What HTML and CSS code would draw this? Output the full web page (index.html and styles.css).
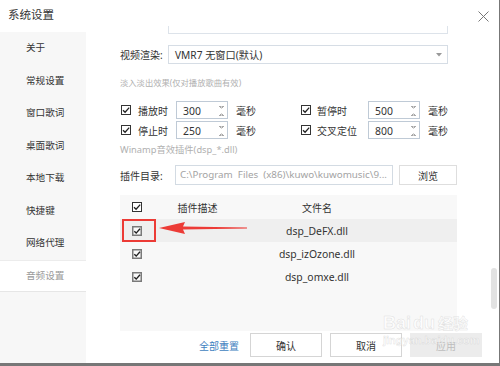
FILE: index.html
```html
<!DOCTYPE html>
<html lang="zh-CN">
<head>
    <meta charset="UTF-8">
    <title>系统设置</title>
    <link rel="stylesheet" href="styles.css">
</head>
<body>
    <div class="window">
        <div class="titlebar">
            <span class="title">系统设置</span>
            <svg class="close" viewBox="0 0 11 11"><path d="M0.5 0.5 L10.5 10.5 M10.5 0.5 L0.5 10.5" stroke="#777" stroke-width="1"/></svg>
        </div>

        <div class="main">
            <nav class="sidebar">
                <div class="nav-item">关于</div>
                <div class="nav-item">常规设置</div>
                <div class="nav-item">窗口歌词</div>
                <div class="nav-item">桌面歌词</div>
                <div class="nav-item">本地下载</div>
                <div class="nav-item">快捷键</div>
                <div class="nav-item">网络代理</div>
                <div class="nav-item active">音频设置</div>
            </nav>

            <section class="panel">
                <div class="stub"></div>

                <div class="field-row">
                    <label class="render-label">视频渲染:</label>
                    <div class="select">
                        <span>VMR7 无窗口(默认)</span>
                        <svg class="caret" viewBox="0 0 6 4"><path d="M0 0 H6 L3 3.5 Z" fill="#999"/></svg>
                    </div>
                </div>

                <p class="hint hint-fade">淡入淡出效果(仅对播放歌曲有效)</p>

                <div class="fade-grid">
                    <svg class="cb" viewBox="0 0 10 10"><rect x="0.5" y="0.5" width="9" height="9" fill="#fff" stroke="#333"/><path d="M2 5.2 L4.1 7.3 L8.2 2.6" fill="none" stroke="#222" stroke-width="1.3"/></svg>
                    <span class="opt">播放时</span>
                    <div class="spin"><span>300</span><i class="arrows"></i></div>
                    <span class="unit">毫秒</span>
                    <svg class="cb" viewBox="0 0 10 10"><rect x="0.5" y="0.5" width="9" height="9" fill="#fff" stroke="#333"/><path d="M2 5.2 L4.1 7.3 L8.2 2.6" fill="none" stroke="#222" stroke-width="1.3"/></svg>
                    <span class="opt">暂停时</span>
                    <div class="spin"><span>500</span><i class="arrows"></i></div>
                    <span class="unit">毫秒</span>

                    <svg class="cb" viewBox="0 0 10 10"><rect x="0.5" y="0.5" width="9" height="9" fill="#fff" stroke="#333"/><path d="M2 5.2 L4.1 7.3 L8.2 2.6" fill="none" stroke="#222" stroke-width="1.3"/></svg>
                    <span class="opt">停止时</span>
                    <div class="spin"><span>250</span><i class="arrows"></i></div>
                    <span class="unit">毫秒</span>
                    <svg class="cb" viewBox="0 0 10 10"><rect x="0.5" y="0.5" width="9" height="9" fill="#fff" stroke="#333"/><path d="M2 5.2 L4.1 7.3 L8.2 2.6" fill="none" stroke="#222" stroke-width="1.3"/></svg>
                    <span class="opt">交叉定位</span>
                    <div class="spin"><span>800</span><i class="arrows"></i></div>
                    <span class="unit">毫秒</span>
                </div>

                <p class="hint hint-winamp">Winamp音效插件(dsp_*.dll)</p>

                <div class="field-row dir-row">
                    <label class="dir-label">插件目录:</label>
                    <div class="path">C:\Program  Files  (x86)\kuwo\kuwomusic\9...</div>
                    <button class="btn browse">浏览</button>
                </div>

                <div class="plugins">
                    <div class="plug-row head">
                        <span class="cell-cb"><svg class="cb" viewBox="0 0 10 10"><rect x="0.5" y="0.5" width="9" height="9" fill="#fff" stroke="#333"/><path d="M2 5.2 L4.1 7.3 L8.2 2.6" fill="none" stroke="#222" stroke-width="1.3"/></svg></span>
                        <span class="cell-desc">插件描述</span>
                        <span class="cell-file">文件名</span>
                    </div>
                    <div class="plug-row selected">
                        <span class="cell-cb"><svg class="cb" viewBox="0 0 10 10"><rect x="0.75" y="0.75" width="8.5" height="8.5" fill="#fafafa" stroke="#7a7a7a" stroke-width="1.5"/><path d="M2.3 5.2 L4.2 7.1 L8 2.8" fill="none" stroke="#222" stroke-width="1.4"/></svg></span>
                        <span class="cell-desc"></span>
                        <span class="cell-file">dsp_DeFX.dll</span>
                    </div>
                    <div class="plug-row">
                        <span class="cell-cb"><svg class="cb" viewBox="0 0 10 10"><rect x="0.75" y="0.75" width="8.5" height="8.5" fill="#fafafa" stroke="#7a7a7a" stroke-width="1.5"/><path d="M2.3 5.2 L4.2 7.1 L8 2.8" fill="none" stroke="#222" stroke-width="1.4"/></svg></span>
                        <span class="cell-desc"></span>
                        <span class="cell-file">dsp_izOzone.dll</span>
                    </div>
                    <div class="plug-row">
                        <span class="cell-cb"><svg class="cb" viewBox="0 0 10 10"><rect x="0.75" y="0.75" width="8.5" height="8.5" fill="#fafafa" stroke="#7a7a7a" stroke-width="1.5"/><path d="M2.3 5.2 L4.2 7.1 L8 2.8" fill="none" stroke="#222" stroke-width="1.4"/></svg></span>
                        <span class="cell-desc"></span>
                        <span class="cell-file">dsp_omxe.dll</span>
                    </div>

                    <!-- annotation drawn over the list -->
                    <div class="mark-box"></div>
                    <svg class="mark-arrow" width="90" height="14" viewBox="0 0 90 14"><path d="M0 7 L26 1 L24 5.6 L88 6.4 L88 7.6 L24 8.4 L26 13 Z" fill="#ec3b36"/></svg>
                </div>

                <div class="footer">
                    <a class="reset">全部重置</a>
                    <button class="btn">确认</button>
                    <button class="btn">取消</button>
                    <button class="btn disabled">应用</button>
                </div>
            </section>

            <div class="scroll-track"><div class="thumb"></div></div>
        </div>

        <div class="watermark">
            <div class="wm-logo">Bai<span class="wm-du">du</span><span class="wm-cn">经验</span></div>
            <div class="wm-url">jingyan.baidu.com</div>
        </div>
    </div>
    <div class="desk"></div>
</body>
</html>
```

FILE: styles.css
```css
* {
    box-sizing: border-box;
}
body {
    margin: 0;
    background: #6e6e6e;
    font-family: "Noto Sans", "Noto Sans CJK SC", sans-serif;
    color: #333;
    font-size: 10px;
}
.window {
    position: relative;
    width: 500px;
    height: 363px;
    background: #fff;
    border-right: 1px solid #777;
    display: flex;
    flex-direction: column;
}
.titlebar {
    height: 32px;
    display: flex;
    align-items: center;
    justify-content: space-between;
    padding: 0 10px 2px 8px;
}
.title {
    font-size: 11.5px;
    line-height: 14px;
    color: #333;
}
.close {
    width: 11px;
    height: 11px;
    margin-top: 2px;
}
.main {
    flex: 1;
    display: flex;
    min-height: 0;
}
.sidebar {
    width: 86px;
    background: #f7f7f7;
}
.nav-item {
    height: 32.5px;
    line-height: 32.5px;
    padding-left: 26px;
    font-size: 9.6px;
    color: #333;
}
.nav-item.active {
    background: #fff;
    color: #9a9a9a;
    border-top: 1px solid #ececec;
    border-bottom: 1px solid #e6e6e6;
    line-height: 30.5px;
}
.panel {
    flex: 1;
    padding-left: 34px;
    display: flex;
    flex-direction: column;
}
.stub {
    margin: -6px 0 0 48px;
    width: 280px;
    height: 8px;
    border: 1px solid #dde3ea;
    border-top: none;
}
.field-row {
    display: flex;
    align-items: center;
    margin-top: 11px;
    height: 19px;
}
.render-label {
    width: 48px;
    font-size: 10px;
}
.select {
    width: 280px;
    height: 19px;
    border: 1px solid #d6dde5;
    display: flex;
    align-items: center;
    justify-content: space-between;
    padding: 0 5px 0 6px;
    font-size: 10.2px;
}
.caret {
    width: 6px;
    height: 4px;
}
.hint {
    margin: 0;
    line-height: 12px;
    color: #b0b0b0;
}
.hint-fade {
    margin-top: 13px;
    font-size: 8.3px;
}
.hint-winamp {
    margin-top: 5px;
    font-size: 9.3px;
}
.fade-grid {
    margin-top: 12px;
    display: grid;
    grid-template-columns: 17px 39px 52px 72px 16px 52px 52px auto;
    grid-auto-rows: 18px;
    row-gap: 2px;
    align-items: center;
}
.cb {
    display: block;
    width: 10px;
    height: 10px;
}
.fade-grid .cb {
    margin-left: 1px;
}
.opt {
    font-size: 10px;
    padding-left: 1px;
}
.spin {
    height: 18px;
    border: 1px solid #bfcad6;
    display: flex;
    align-items: center;
    justify-content: space-between;
    padding: 1px 3px 0 6px;
    font-size: 10.4px;
}
.arrows {
    width: 5px;
    height: 10px;
    background:
        linear-gradient(to top right, transparent 50%, #a8a8a8 50%) 0 0 / 2.5px 3px no-repeat,
        linear-gradient(to top left, transparent 50%, #a8a8a8 50%) 2.5px 0 / 2.5px 3px no-repeat,
        linear-gradient(to bottom right, transparent 50%, #a8a8a8 50%) 0 7px / 2.5px 3px no-repeat,
        linear-gradient(to bottom left, transparent 50%, #a8a8a8 50%) 2.5px 7px / 2.5px 3px no-repeat;
}
.unit {
    padding-left: 8px;
    font-size: 10px;
}
.dir-row {
    margin-top: 9px;
    height: 20px;
}
.dir-label {
    width: 55px;
    font-size: 10px;
}
.path {
    width: 218px;
    height: 20px;
    border: 1px solid #d3dbe3;
    padding: 0 3px 0 4px;
    line-height: 18px;
    font-size: 9.8px;
    color: #a3a3a3;
    white-space: pre;
    overflow: hidden;
}
.btn {
    width: 72px;
    height: 24px;
    background: #fff;
    border: 1px solid #d5d5d5;
    font-family: inherit;
    font-size: 10px;
    color: #333;
    padding: 0;
}
.browse {
    width: 58px;
    height: 20px;
    margin-left: 6px;
    border-color: #dedede;
}
.plugins {
    position: relative;
    margin-top: 10px;
    width: 337px;
    height: 136px;
    background: #f8f8f8;
}
.plug-row {
    display: grid;
    grid-template-columns: 35px 85px 154px 1fr;
    height: 23px;
    align-items: center;
    font-size: 10.4px;
}
.plug-row.head {
    height: 24px;
    font-size: 10px;
}
.plug-row.selected {
    background: #efefef;
}
.cell-cb .cb {
    margin-left: 12px;
}
.cell-desc, .cell-file {
    text-align: center;
}
.mark-box {
    position: absolute;
    left: 2px;
    top: 24px;
    width: 34px;
    height: 23px;
    border: 2px solid #ec3b36;
}
.mark-arrow {
    position: absolute;
    left: 39px;
    top: 26px;
}
.footer {
    margin-top: 2px;
    display: flex;
    justify-content: flex-end;
    align-items: center;
    gap: 8px;
    padding-right: 9px;
}
.reset {
    color: #3f7fc0;
    font-size: 10px;
    margin-right: 3px;
}
.btn.disabled {
    background: #ececec;
    border-color: #ececec;
    color: #bdbdbd;
}
.scroll-track {
    width: 8px;
    padding: 236px 2px 0 0;
}
.thumb {
    width: 6px;
    height: 41px;
    background: #e2e2e2;
    border-radius: 3px;
}
.watermark {
    position: absolute;
    left: 383px;
    top: 314px;
    color: rgba(255, 255, 255, 0.6);
    -webkit-text-stroke: 0.5px rgba(190, 190, 190, 0.45);
    line-height: 1;
    pointer-events: none;
}
.wm-logo {
    font-family: "Liberation Sans", sans-serif;
    font-weight: bold;
    font-size: 18px;
}
.wm-du {
    margin-left: 2px;
}
.wm-cn {
    font-family: "Noto Sans CJK SC", sans-serif;
    font-size: 15px;
    margin-left: 3px;
}
.wm-url {
    margin-top: 3px;
    font-family: "Liberation Sans", sans-serif;
    font-size: 11px;
    font-weight: bold;
}
.desk {
    height: 3px;
    background: #777;
}
```
